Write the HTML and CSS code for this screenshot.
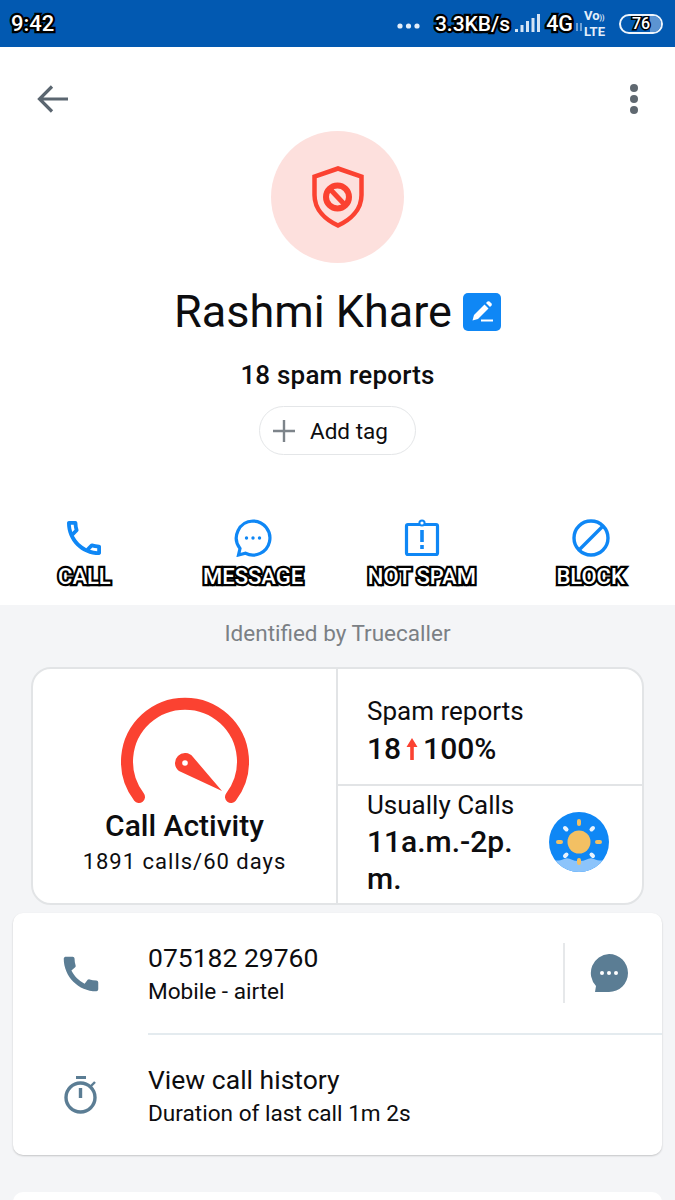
FILE: index.html
```html
<!DOCTYPE html>
<html>
    <head>
        <title>Rashmi Khare</title>
        <link rel="stylesheet" href="styles.css">
    </head>
    <body>
        <div class="statusbar">
            <span class="outlined time">9:42</span>
            <div class="status_right">
                <svg class="more_dots" width="23" height="6" viewBox="0 0 23 6"><circle cx="3" cy="3" r="2.6"/><circle cx="11.5" cy="3" r="2.6"/><circle cx="20" cy="3" r="2.6"/></svg>
                <span class="outlined speed">3.3KB/s</span>
                <svg class="signal" width="26" height="20" viewBox="0 0 26 20"><rect x="0" y="15" width="3" height="3"/><rect x="5.5" y="11" width="3" height="7"/><rect x="11" y="7" width="3" height="11"/><rect x="16.500" y="4" width="3" height="14"/><rect x="22" y="0" width="3" height="18"/></svg>
                <span class="outlined net">4G</span>
                <svg class="updown" width="8" height="10" viewBox="0 0 8 10" fill="none" stroke="#b9d2ee" stroke-width="1.200"><path d="M2 1 V9 M6 1 V9"/></svg>
                <span class="volte">Vo<small>))</small><br>LTE</span>
                <div class="battery"><span class="battery_fill"></span><span class="outlined battery_num">76</span></div>
            </div>
        </div>

        <div class="toolbar">
            <svg width="32" height="28" viewBox="0 0 32 28" fill="none" stroke="#5b6670" stroke-width="3.2"><path d="M15 1.500 L2.500 14 L15 26.500 M2.500 14 H31"/></svg>
            <svg width="10" height="32" viewBox="0 0 10 32" fill="#5f6870"><circle cx="5" cy="5" r="4"/><circle cx="5" cy="16" r="4"/><circle cx="5" cy="27" r="4"/></svg>
        </div>

        <div class="profile">
            <div class="avatar">
                <svg width="52" height="62" viewBox="0 0 52 62" fill="none" stroke="#fb4231">
                    <path stroke-width="4.500" d="M26 2.500 L49.500 10.500 V29 C49.500 44 38 54 26 59.500 C14 54 2.500 44 2.500 29 V10.500 Z"/>
                    <circle stroke-width="6" cx="25.500" cy="31" r="11.500"/>
                    <path stroke-width="5" d="M18 23 L33 39"/>
                </svg>
            </div>
            <div class="name_row">
                <h1>Rashmi Khare</h1>
                <div class="edit_btn">
                    <svg width="24" height="24" viewBox="0 0 24 24" fill="#fff"><path d="M14.500 4.500 L18.500 8.500 L8 19 L2.500 20.500 L4 15 Z"/><path d="M16 3 L17.500 1.500 Q18.500 .8 19.500 1.500 L21.500 3.500 Q22.200 4.500 21.500 5.500 L20 7 Z"/><rect x="11" y="19.500" width="12" height="2"/></svg>
                </div>
            </div>
            <p class="spam_count">18 spam reports</p>
            <div class="tag_btn">
                <svg width="22" height="22" viewBox="0 0 22 22" fill="none" stroke="#7d848a" stroke-width="2.400"><path d="M11 0 V22 M0 11 H22"/></svg>
                <span>Add tag</span>
            </div>
        </div>

        <ul class="actions">
            <li>
                <svg width="34" height="38" viewBox="3 3 18 18" fill="#0f87f5"><path d="M6.540 5c.06.89.21 1.760.45 2.590l-1.200 1.200c-.41-1.200-.67-2.470-.76-3.790h1.510m9.860 12.020c.85.24 1.720.39 2.600.45v1.490c-1.320-.09-2.590-.35-3.800-.75l1.200-1.190M7.500 3H4c-.55 0-1 .45-1 1 0 9.390 7.610 17 17 17 .55 0 1-.45 1-1v-3.490c0-.55-.45-1-1-1-1.240 0-2.450-.2-3.570-.57-.1-.04-.21-.05-.31-.05-.26 0-.51.1-.71.29l-2.200 2.200c-2.830-1.450-5.150-3.760-6.590-6.590l2.200-2.200c.28-.28.36-.67.25-1.020C8.700 6.450 8.500 5.250 8.500 4c0-.55-.45-1-1-1z"/></svg>
                <span class="outlined">CALL</span>
            </li>
            <li>
                <svg width="38" height="38" viewBox="0 0 38 38"><path fill="none" stroke="#0f87f5" stroke-width="3.200" d="M19 2 A17 17 0 1 1 11.500 34.300 L4.500 36 L6 29.500 A17 17 0 0 1 19 2 Z"/><circle cx="12.500" cy="19" r="1.700" fill="#0f87f5"/><circle cx="19" cy="19" r="1.700" fill="#0f87f5"/><circle cx="25.500" cy="19" r="1.700" fill="#0f87f5"/></svg>
                <span class="outlined">MESSAGE</span>
            </li>
            <li>
                <svg width="36" height="38" viewBox="0 0 36 38" fill="none" stroke="#0f87f5"><path stroke-width="3.200" d="M4 5.500 H32 A1.500 1.500 0 0 1 33.500 7 V34 A1.500 1.500 0 0 1 32 35.500 H4 A1.500 1.500 0 0 1 2.500 34 V7 A1.500 1.500 0 0 1 4 5.500 Z"/><circle stroke-width="2" cx="18" cy="4" r="2.600" fill="#fff"/><path stroke-width="3.600" d="M18 11 V23 M18 26 V30"/></svg>
                <span class="outlined">NOT SPAM</span>
            </li>
            <li>
                <svg width="38" height="38" viewBox="0 0 38 38" fill="none" stroke="#0f87f5" stroke-width="3.400"><circle cx="19" cy="19" r="17"/><path d="M7 31 L31 7"/></svg>
                <span class="outlined">BLOCK</span>
            </li>
        </ul>

        <div class="details">
            <p class="identified">Identified by Truecaller</p>

            <div class="stats_card">
                <div class="activity">
                    <svg class="gauge" width="128" height="108" viewBox="0 -2 128 108">
                        <path fill="none" stroke="#fb4231" stroke-width="12" stroke-linecap="round" d="M18 98 A58 58 0 1 1 110 98"/>
                        <path fill="#fb4231" d="M72 58 L101 92 L58 72 A10 10 0 1 1 72 58 Z"/>
                        <circle cx="64" cy="64" r="2.800" fill="#fff"/>
                    </svg>
                    <h2>Call Activity</h2>
                    <p class="calls_count">1891 calls/60 days</p>
                </div>
                <div class="stat stat_spam">
                    <p class="stat_label">Spam reports</p>
                    <p class="stat_value">18<svg class="up_arrow" width="14" height="24" viewBox="0 0 14 24" fill="#fb4231"><path d="M7 1 L12.500 10 H8.800 V23 H5.200 V10 H1.500 Z"/></svg>100%</p>
                </div>
                <div class="stat stat_time">
                    <div>
                        <p class="stat_label">Usually Calls</p>
                        <p class="stat_value time_value">11a.m.-2p.<br>m.</p>
                    </div>
                    <svg class="sun" width="60" height="60" viewBox="0 0 60 60">
                        <defs><clipPath id="sunclip"><circle cx="30" cy="30" r="30"/></clipPath></defs>
                        <circle cx="30" cy="30" r="30" fill="#0f87f5"/>
                        <path clip-path="url(#sunclip)" fill="#8cc4fb" d="M0 50 C6 47 10 50 15 47 C20 44 24 50 30 49 C36 50 40 44 45 47 C50 50 54 47 60 50 V60 H0 Z"/>
                        <circle cx="30" cy="30" r="11.500" fill="#f3c063"/>
                        <g stroke="#f3c063" stroke-width="4" stroke-linecap="round">
                            <path d="M30 9 V12 M30 48 V51 M9 30 H12 M48 30 H51"/>
                        </g>
                        <g stroke="#fff" stroke-width="4" stroke-linecap="round" opacity=".9">
                            <path d="M16 16 L17.500 17.500 M44 16 L42.500 17.500 M16 44 L17.500 42.500 M44 44 L42.500 42.500"/>
                        </g>
                    </svg>
                </div>
            </div>

            <div class="info_card">
                <div class="info_row first_row">
                    <div class="info_icon">
                        <svg width="46" height="46" viewBox="0 0 24 24" fill="#5b7d94"><path d="M20.010 15.380c-1.230 0-2.420-.2-3.530-.56-.35-.12-.74-.03-1.010.24l-1.570 1.970c-2.830-1.350-5.480-3.900-6.890-6.830l1.950-1.660c.27-.28.35-.67.24-1.020-.37-1.110-.56-2.300-.56-3.530 0-.54-.45-.99-.99-.99H4.190C3.650 3 3 3.240 3 3.990 3 13.280 10.730 21 20.010 21c.71 0 .99-.63.99-1.180v-3.450c0-.54-.45-.99-.99-.99z"/></svg>
                    </div>
                    <div class="info_main with_line">
                        <div class="info_text">
                            <p class="info_title">075182 29760</p>
                            <p class="info_sub">Mobile - airtel</p>
                        </div>
                        <div class="sms_btn">
                            <svg width="38" height="38" viewBox="0 0 38 38"><path fill="#5b7d94" d="M19 0 A19 19 0 1 1 19 38 H5 L6 32 A19 19 0 0 1 19 0 Z"/><circle cx="12" cy="19" r="2" fill="#fff"/><circle cx="19" cy="19" r="2" fill="#fff"/><circle cx="26" cy="19" r="2" fill="#fff"/></svg>
                        </div>
                    </div>
                </div>
                <div class="info_row">
                    <div class="info_icon">
                        <svg width="34" height="38" viewBox="0 0 34 38" fill="none" stroke="#5b7d94"><path stroke-width="3" d="M12 1.500 H22"/><circle stroke-width="3.400" cx="16.500" cy="21.500" r="14.500"/><path stroke-width="3.400" d="M16.500 12 V22"/><path stroke-width="2.400" d="M27 10 L31 6"/></svg>
                    </div>
                    <div class="info_main">
                        <div class="info_text">
                            <p class="info_title">View call history</p>
                            <p class="info_sub">Duration of last call 1m 2s</p>
                        </div>
                    </div>
                </div>
            </div>

            <div class="next_card"></div>
        </div>
    </body>
</html>
```

FILE: styles.css
```css
*{
margin: 0;
padding: 0;
box-sizing: border-box;
font-family: Roboto, sans-serif;
}
body{
width: 675px;
height: 1200px;
overflow: hidden;
background: #fff;
color: #0d0d0f;
}
.outlined{
color: #fff;
font-weight: 500;
-webkit-text-stroke: 4.5px #000;
paint-order: stroke fill;
}
.statusbar{
height: 47px;
padding: 0 12px 0 11px;
display: flex;
align-items: center;
justify-content: space-between;
background: #0259b1;
}
.time{
font-size: 22px;
}
.status_right{
display: flex;
align-items: center;
}
.more_dots{
fill: #e3eefa;
margin-top: 4px;
margin-right: 15px;
}
.speed{
font-size: 21px;
margin-right: 5px;
}
.signal{
fill: #d5e4f5;
margin-right: 5px;
}
.net{
font-size: 21.5px;
}
.updown{
margin: 6px 1px 0 2px;
}
.volte{
color: #e3eefa;
font-size: 13px;
font-weight: 700;
line-height: 13px;
width: 25px;
margin-right: 10px;
}
.volte small{
font-size: 7px;
}
.battery{
width: 44px;
height: 20px;
border: 2px solid #eef4fb;
border-radius: 10px;
position: relative;
display: flex;
align-items: center;
justify-content: center;
overflow: hidden;
}
.battery_fill{
position: absolute;
top: 0;
right: 0;
bottom: 0;
width: 11px;
background: #5c94d2;
}
.battery_num{
position: relative;
font-size: 16px;
-webkit-text-stroke: 3px #000;
}
.toolbar{
padding: 36px 36px 16px 37px;
display: flex;
align-items: center;
justify-content: space-between;
}
.profile{
display: flex;
flex-direction: column;
align-items: center;
}
.avatar{
width: 133px;
height: 132px;
border-radius: 50%;
background: #fde0dd;
display: flex;
align-items: center;
justify-content: center;
}
.name_row{
margin-top: 23px;
display: flex;
align-items: center;
gap: 11px;
}
h1{
font-size: 45px;
font-weight: 400;
line-height: 52px;
}
.edit_btn{
width: 38px;
height: 38px;
border-radius: 5px;
background: #0f87f5;
display: flex;
align-items: center;
justify-content: center;
}
.spam_count{
margin-top: 22px;
font-size: 26px;
letter-spacing: 0.2px;
font-weight: 500;
line-height: 30px;
}
.tag_btn{
margin-top: 16px;
width: 157px;
height: 49px;
padding-left: 13px;
border: 1px solid #e4e6e8;
border-radius: 25px;
display: flex;
align-items: center;
gap: 15px;
font-size: 22.5px;
}
.actions{
margin-top: 64px;
height: 86px;
display: grid;
grid-template-columns: repeat(4, 1fr);
list-style: none;
}
.actions li{
display: flex;
flex-direction: column;
align-items: center;
}
.actions svg{
flex: none;
}
.actions .outlined{
margin-top: 7px;
font-size: 22px;
line-height: 26px;
}
.details{
height: 595px;
padding-top: 15px;
background: #f4f5f7;
}
.identified{
text-align: center;
color: #7b8085;
font-size: 22.5px;
line-height: 26px;
}
.stats_card{
margin: 21px 31px 0;
height: 238px;
background: #fff;
border: 2px solid #e2e4e6;
border-radius: 20px;
display: grid;
grid-template-columns: 305px 1fr;
grid-template-rows: 117px 1fr;
}
.activity{
grid-row: 1 / 3;
border-right: 2px solid #e2e4e6;
display: flex;
flex-direction: column;
align-items: center;
padding-top: 28px;
}
h2{
font-size: 30px;
font-weight: 500;
line-height: 36px;
margin-top: 3px;
}
.calls_count{
font-size: 22px;
letter-spacing: 1px;
line-height: 28px;
margin-top: 4px;
}
.stat{
padding-left: 29px;
}
.stat_spam{
padding-top: 27px;
border-bottom: 2px solid #e2e4e6;
}
.stat_label{
font-size: 26px;
line-height: 30px;
}
.stat_value{
font-size: 30px;
font-weight: 500;
line-height: 34px;
margin-top: 6px;
display: flex;
align-items: center;
}
.up_arrow{
margin: 0 4px;
}
.stat_time{
padding-top: 4px;
display: flex;
justify-content: space-between;
}
.time_value{
display: block;
line-height: 37px;
margin-top: 3px;
}
.sun{
margin-top: 22px;
margin-right: 33px;
}
.info_card{
margin: 8px 13px 0;
height: 242px;
background: #fff;
border-radius: 10px;
box-shadow: 0 1px 2px rgba(0,0,0,0.2);
}
.info_row{
height: 120px;
display: flex;
}
.first_row{
height: 122px;
}
.info_icon{
width: 135px;
flex: none;
display: flex;
align-items: center;
justify-content: center;
}
.info_main{
flex: 1;
display: flex;
align-items: center;
justify-content: space-between;
}
.with_line{
border-bottom: 2px solid #e4ebef;
}
.info_text{
padding-top: 3px;
}
.info_title{
font-size: 26.5px;
line-height: 32px;
}
.info_sub{
font-size: 22.6px;
line-height: 30px;
margin-top: 3px;
}
.sms_btn{
width: 99px;
height: 60px;
border-left: 2px solid #e6e8ea;
display: flex;
align-items: center;
justify-content: flex-end;
padding-right: 34px;
}
.next_card{
margin: 37px 13px 0;
height: 60px;
background: #fff;
border-radius: 10px;
}
```
